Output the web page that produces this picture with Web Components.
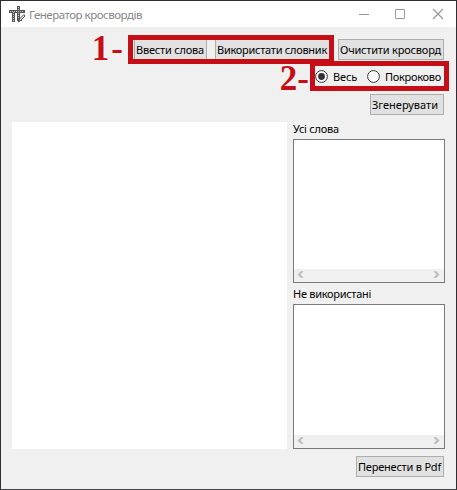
<!DOCTYPE html>
<html lang="uk"><head><meta charset="utf-8"><title>Генератор кросвордів</title>
<style>html,body{margin:0;height:100%}body{overflow:hidden;background:#333136;font-family:"Noto Sans","Open Sans",sans-serif}</style>
</head><body><crossword-window></crossword-window>
<script>
const define=(name,html,setup)=>customElements.define(name,class extends HTMLElement{
  constructor(){super();this.attachShadow({mode:'open'}).innerHTML=html;}
  connectedCallback(){if(setup)setup(this,this.shadowRoot);}
});

// Single-line label whose tracking is tuned to a given width.
define('fit-text',`<style>:host{display:block;white-space:pre;line-height:16px;height:16px}span{display:inline-block}</style><span><slot></slot></span>`,
 (el,root)=>{
  const s=root.querySelector('span'),w=+el.getAttribute('w');
  const n=el.textContent.length,now=s.getBoundingClientRect().width;
  s.style.letterSpacing=((w-now)/n)+'px';
 });

define('push-button',`<style>:host{display:block;box-sizing:border-box;height:21px;border:1px solid #adadad;background:#e1e1e1;padding:2px 0 0 var(--pad,1px);flex:none}</style><slot></slot>`);

define('radio-option',`<style>:host{display:flex;align-items:center;flex:none}
svg{display:block;width:13px;height:13px;margin-right:var(--gap,5px)}.dot{display:none}:host([checked]) .dot{display:block}</style>
<svg viewBox="0 0 13 13"><circle cx="6.5" cy="6.5" r="5.9" fill="#fff" stroke="#333" stroke-width="1"/><circle class="dot" cx="6.5" cy="6.5" r="3.4" fill="#333"/></svg><slot></slot>`);

define('word-list',`<style>:host{display:flex;flex-direction:column;justify-content:flex-end;box-sizing:border-box;width:152px;border:1px solid #7a7a7a;background:#fff}
div{box-sizing:border-box;height:13px;background:#f0f0f0;display:flex;justify-content:space-between;padding:2px 4px 0 3px;align-items:flex-start}svg{display:block;width:7px;height:7px}path{fill:none;stroke:#bfbfbf;stroke-width:2.2}</style>
<div><svg viewBox="0 0 7 7"><path d="M5.5 0L2 3.5L5.5 7"/></svg><svg viewBox="0 0 7 7"><path d="M1.5 0L5 3.5L1.5 7"/></svg></div>`);

define('title-bar',`<style>:host{display:flex;height:26px;background:#fff;color:#868686;font-size:11.5px;align-items:center}
.logo{width:17px;height:17px;margin:0 3px 0 8px}.min{margin-left:auto}.ctl{width:12px;height:12px}.max{margin-left:24px}.close{margin:0 12px 0 26px}fit-text{margin-top:1px}svg{display:block;flex:none;fill:none}</style>
<svg class="logo" viewBox="0 0 17 17"><path d="M0 5.5H16M4.5 5V16M9.5 0V13.5H13" stroke="#555" stroke-width="3"/><path d="M1 5.5H15M4.5 6V15M9.5 1V13" stroke="#c9c9c9" stroke-width="1" stroke-dasharray="1 1"/><path d="M9.5 16L10.5 13L15 8.5L16 10L11.5 14.5Z" fill="#fff" stroke="#444"/></svg>
<fit-text w="113">Генератор кросвордів</fit-text>
<svg class="ctl min" viewBox="0 0 12 12" stroke="#999"><path d="M1 6.5H11"/></svg>
<svg class="ctl max" viewBox="0 0 12 12" stroke="#999"><path d="M1.5 1.5H10.5V10.5H1.5Z"/></svg>
<svg class="ctl close" viewBox="0 0 12 12" stroke="#999" stroke-width="1.2"><path d="M1 1L11 11M11 1L1 11"/></svg>`);

// Red callout frame with its number, laid over the controls.
define('callout-mark',`<style>:host{position:absolute;display:block;box-sizing:border-box;border:5px solid #c50e16}
b{position:absolute;right:100%;display:flex;gap:var(--mark-gap,0px);font:bold 35px/30px "Liberation Serif",serif;color:#c50e16;white-space:nowrap;top:var(--mark-top);margin-right:var(--mark-right)}</style><b><slot></slot></b>`);

define('crossword-window',`<style>
:host{display:flex;flex-direction:column;position:relative;box-sizing:border-box;width:457px;height:490px;border:1px solid #2f2d33;border-bottom-color:#48484b;font-size:11px;color:#000}
main{flex:1;background:#f0f0f0;padding:12px 12px 0 11px}
.tools{display:flex;justify-content:flex-end}
.modes{display:flex;margin:10px 0 0 303px;height:13px}
.go{display:flex;justify-content:flex-end;margin-top:11px}
.body{display:flex;gap:6px;margin-top:7px;height:327px;margin-right:-1px}
.board{width:275px;background:#fff}
.side{display:flex;flex-direction:column}
.foot{display:flex;justify-content:flex-end;margin-top:7px}
</style>
<title-bar></title-bar>
<main>
 <div class="tools">
  <push-button style="width:73px;margin-right:8px"><fit-text w="68">Ввести слова</fit-text></push-button>
  <push-button style="width:118px;margin-right:5px"><fit-text w="110">Використати словник</fit-text></push-button>
  <push-button style="width:106px"><fit-text w="101">Очистити кросворд</fit-text></push-button>
 </div>
 <div class="modes"><radio-option checked style="width:52px"><fit-text w="24">Весь</fit-text></radio-option>
 <radio-option><fit-text w="56">Покроково</fit-text></radio-option></div>
 <div class="go"><push-button style="width:74px"><fit-text w="66">Згенерувати</fit-text></push-button></div>
 <div class="body"><div class="board"></div><div class="side">
  <fit-text w="46" style="margin:-1px 0 2px">Усі слова</fit-text><word-list style="height:144px"></word-list>
  <fit-text w="78" style="margin:3px 0 2px">Не використані</fit-text><word-list style="height:145px"></word-list>
 </div></div>
 <div class="foot"><push-button style="width:88px"><fit-text w="83">Перенести в Pdf</fit-text></push-button></div>
</main>
<callout-mark style="left:127px;top:34px;width:206px;height:29px;--mark-gap:2px;--mark-top:-6px;--mark-right:10px"><span>1</span><span>-</span></callout-mark>
<callout-mark style="left:309px;top:60px;width:139px;height:30px;--mark-top:-2px;--mark-right:6px"><span>2</span><span>-</span></callout-mark>`);
</script></body></html>
